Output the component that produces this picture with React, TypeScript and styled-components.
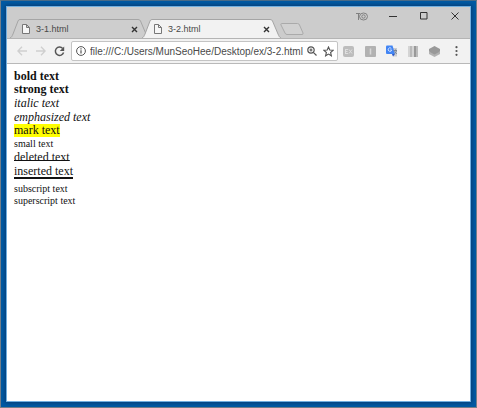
import React from "react";
import styled, { createGlobalStyle, css } from "styled-components";

const GlobalStyle = createGlobalStyle`
  *, *::before, *::after { box-sizing: border-box; }
  body { margin: 0; }
  button, input { font: inherit; color: inherit; border: 0; padding: 0; margin: 0; background: none; }
  svg { display: block; flex: none; }
`;

const Desktop = styled.div`
  min-height: 100vh;
  display: flex;
  padding: 5px;
  background: #005aa4;
  border: 1px solid #75808a;
  border-top-color: #496c88;
  font-family: "Liberation Sans", Arial, sans-serif;
`;

const BrowserWindow = styled.main`
  flex: 1;
  min-width: 0;
  display: flex;
  flex-direction: column;
  background: #fff;
  outline: 1px solid #70afe0;
  outline-offset: -1px;
  box-shadow: 0 0 4px 1px #083c72;
  padding: 1px;
`;

const TitleBar = styled.header`
  display: flex;
  align-items: flex-end;
  height: 31px;
  padding-left: 3px;
  background: #cccccc;
`;

const TabShape = styled.div<{ $active?: boolean }>`
  position: relative;
  z-index: ${(p) => (p.$active ? 1 : 0)};
  display: flex;
  flex: 0 1 139px;
  min-width: 0;
  height: 19px;
  & + & { margin-left: -7px; }
  color: ${(p) => (p.$active ? "#f2f2f2" : "#cecece")};
`;

const TabBody = styled.div`
  flex: 1;
  min-width: 0;
  display: flex;
  align-items: center;
  justify-content: space-between;
  border-top: 1px solid #a5a5a5;
  background: currentColor;
`;

const TabTitle = styled.button`
  display: flex;
  align-items: center;
  gap: 6px;
  padding-left: 2px;
  height: 18px;
  font-size: 9px;
  line-height: 12px;
  color: #484848;
`;

const CloseTab = styled.button`
  color: #333;
`;

const NewTab = styled.button`
  margin: 0 0 3px -1px;
`;

const WindowButtons = styled.div`
  display: flex;
  align-self: flex-start;
  align-items: center;
  margin-left: auto;
  height: 18px;
`;

const WindowButton = styled.button`
  display: grid;
  place-items: center;
  width: 31px;
  height: 16px;
  color: #333;
`;

const Toolbar = styled.nav`
  display: flex;
  align-items: center;
  height: 26px;
  padding: 0 7px 0 5px;
  background: #f2f2f2;
  border-top: 1px solid #b4b4b4;
  border-bottom: 1px solid #b9b9b9;
`;

const IconButton = styled.button<{ $muted?: boolean }>`
  display: grid;
  place-items: center;
  flex: none;
  width: 19px;
  height: 18px;
  color: ${(p) => (p.$muted ? "#cfcfcf" : "#555")};
`;

const AddressBar = styled.div`
  flex: 1;
  min-width: 0;
  display: flex;
  align-items: center;
  height: 20px;
  margin-left: 2px;
  padding-left: 4px;
  background: #fff;
  border: 1px solid #c4c4c4;
  border-radius: 2px;
  color: #555;

  ${IconButton} { width: 17px; }
`;

const AddressInput = styled.input`
  flex: 1;
  min-width: 0;
  margin-left: 4px;
  height: 16px;
  font-size: 10px;
  color: #4a4a4a;
  outline: 0;
`;

const Extensions = styled.div`
  display: flex;
  align-items: center;
  justify-content: space-between;
  flex: none;
  width: 121px;
  margin-left: 4px;
`;

const ExtensionButton = styled.button`
  display: grid;
  place-items: center;
  width: 13px;
  height: 18px;
`;

const Page = styled.article`
  flex: 1;
  padding: 5px 7px;
  background: #fff;
  color: #111;
  font-family: "Liberation Serif", "Times New Roman", serif;
  font-size: 12px;
`;

const Line = styled.div<{ $height: number; $gap?: boolean }>`
  height: ${(p) => p.$height}px;
  line-height: ${(p) => p.$height}px;
  ${(p) => p.$gap && css`margin-top: 5px;`}

  small, sub, sup { font-size: 10px; line-height: inherit; vertical-align: top; }
  mark { display: inline-block; background: #ff0; color: #111; }
  del { text-decoration: underline 1px; text-underline-offset: -1px; text-decoration-skip-ink: none; }
  ins { text-decoration: underline 2px; text-underline-offset: 2px; }
`;

const FileIcon = () => (
  <svg width="8" height="10" viewBox="0 0 8 10" fill="none" stroke="#777">
    <path d="M.5.5h4l3 3v6h-7zM4.5.5v3h3" fill="#f6f6f6" />
  </svg>
);

function BrowserTab({ title, active }: { title: string; active?: boolean }) {
  return (
    <TabShape $active={active}>
      <svg width="10" height="19" viewBox="0 0 10 19">
        <path d="M0 19C2 18 2 17 3 15L8 2Q8.500 .5 10 .5V19Z" fill="currentColor" />
        <path d="M0 19C2 18 2 17 3 15L8 2Q8.500 .5 10 .5" fill="none" stroke="#a5a5a5" />
      </svg>
      <TabBody>
        <TabTitle role="tab" aria-selected={!!active}>
          <FileIcon />
          {title}
        </TabTitle>
        <CloseTab aria-label={`Close ${title}`}>
          <svg width="7" height="7" viewBox="0 0 7 7" stroke="currentColor" strokeWidth="1.400">
            <path d="M1 1l5 5M6 1L1 6" />
          </svg>
        </CloseTab>
      </TabBody>
      <svg width="11" height="19" viewBox="0 0 11 19">
        <path d="M0 .5Q2 .5 2.500 2L8 15C9 17 9 18 11 19H0Z" fill="currentColor" />
        <path d="M0 .5Q2 .5 2.500 2L8 15C9 17 9 18 11 19" fill="none" stroke="#a5a5a5" />
      </svg>
    </TabShape>
  );
}

export default function App() {
  return (
    <>
      <GlobalStyle />
      <Desktop>
        <BrowserWindow>
          <TitleBar>
            <BrowserTab title="3-1.html" />
            <BrowserTab title="3-2.html" active />
            <NewTab aria-label="New tab">
              <svg width="24" height="12" viewBox="0 0 24 12">
                <path d="M1.500.5H17.500Q19 .5 19.500 2L23 10Q23.500 11.500 22 11.500H7Q5.500 11.500 5 10L1 2Q.5.5 1.500.5Z" fill="#d1d1d1" stroke="#aaa" />
              </svg>
            </NewTab>
            <WindowButtons>
              <WindowButton aria-label="Profile">
                <svg width="12" height="9" viewBox="0 0 12 9" fill="none" stroke="#808080">
                  <path d="M0 1.500h4M2.500 1.500v6.500" />
                  <ellipse cx="7.500" cy="4.500" rx="4" ry="3.500" />
                  <circle cx="7.500" cy="4.500" r="1.700" />
                </svg>
              </WindowButton>
              <WindowButton aria-label="Minimize">
                <svg width="8" height="8" viewBox="0 0 8 8" stroke="currentColor"><path d="M0 4.500h8" /></svg>
              </WindowButton>
              <WindowButton aria-label="Maximize">
                <svg width="8" height="8" viewBox="0 0 8 8" stroke="currentColor"><path d="M.5.5h6.500v6.500H.5z" fill="none" /></svg>
              </WindowButton>
              <WindowButton aria-label="Close">
                <svg width="8" height="8" viewBox="0 0 8 8" stroke="currentColor"><path d="M.5.5l7 7M7.500.5l-7 7" /></svg>
              </WindowButton>
            </WindowButtons>
          </TitleBar>
          <Toolbar>
            <IconButton aria-label="Back" $muted>
              <svg width="10" height="10" viewBox="0 0 10 10" fill="none" stroke="currentColor" strokeWidth="1.300"><path d="M10 5H1M5 .8L.9 5 5 9.200" /></svg>
            </IconButton>
            <IconButton aria-label="Forward" $muted>
              <svg width="10" height="10" viewBox="0 0 10 10" fill="none" stroke="currentColor" strokeWidth="1.300"><path d="M0 5h9M5 .8L9.100 5 5 9.200" /></svg>
            </IconButton>
            <IconButton aria-label="Reload">
              <svg width="11" height="11" viewBox="0 0 11 11" fill="none" stroke="currentColor" strokeWidth="1.500">
                <path d="M8.700 2.400A4.200 4.200 0 1 0 9.600 6.500" />
                <path d="M10.200.5v4.400H5.800z" fill="currentColor" stroke="none" />
              </svg>
            </IconButton>
            <AddressBar>
              <svg width="10" height="10" viewBox="0 0 10 10" fill="none" stroke="currentColor">
                <circle cx="5" cy="5" r="4.400" />
                <path d="M5 4.300v3.200M5 2.300v1.200" strokeWidth="1.200" />
              </svg>
              <AddressInput aria-label="Address" defaultValue="file:///C:/Users/MunSeoHee/Desktop/ex/3-2.html" />
              <IconButton aria-label="Zoom">
                <svg width="10" height="10" viewBox="0 0 10 10" fill="none" stroke="currentColor" strokeWidth="1.200">
                  <circle cx="4" cy="4" r="3.200" /><path d="M6.300 6.300l3.200 3.200M2.500 4h3M4 2.500v3" />
                </svg>
              </IconButton>
              <IconButton aria-label="Bookmark">
                <svg width="11" height="11" viewBox="0 0 11 11" fill="none" stroke="currentColor" strokeWidth="1.100">
                  <path d="M5.500 1l1.300 3 3.300.3-2.500 2.200.8 3.300-2.900-1.700-2.900 1.700.8-3.300L.9 4.300 4.200 4z" />
                </svg>
              </IconButton>
            </AddressBar>
            <Extensions>
              <ExtensionButton aria-label="Code extension">
                <svg width="11" height="11" viewBox="0 0 11 11">
                  <rect width="11" height="11" rx="2" fill="#bdbdbd" />
                  <path d="M2 3.500h3M2 5.500h2.500M2 7.500h3M2.500 3.500v4M6 3.500l3 4M9 3.500l-3 4" stroke="#dedede" />
                </svg>
              </ExtensionButton>
              <ExtensionButton aria-label="Text extension">
                <svg width="11" height="11" viewBox="0 0 11 11">
                  <rect width="11" height="11" rx="1" fill="#b2b2b2" /><path d="M5.500 2.500v6" stroke="#d8d8d8" strokeWidth="1.500" />
                </svg>
              </ExtensionButton>
              <ExtensionButton aria-label="Translate">
                <svg width="12" height="12" viewBox="0 0 12 12">
                  <path d="M5 3h6v8.500H7z" fill="#c9cbd0" />
                  <path d="M1 .5h5.500L9 9H1Q0 9 0 8V1.500Q0 .5 1 .5z" fill="#4285f4" />
                  <path d="M6 9h3l-2 2.500z" fill="#2a56c6" />
                  <path d="M5.300 3.400A1.800 1.800 0 1 0 5.700 5H4.200" fill="none" stroke="#cfe0ff" />
                  <path d="M7.500 5.500h3.500M9.500 4.500v1M10.500 5.500Q10 8 8.500 8.500M8.500 6.500l2.300 2.500" fill="none" stroke="#7b8796" />
                </svg>
              </ExtensionButton>
              <ExtensionButton aria-label="Color extension">
                <svg width="10" height="11" viewBox="0 0 10 11">
                  <path d="M0 0h2v11H0z" fill="#d4d4d4" /><path d="M2 0h2v11H2z" fill="#bababa" />
                  <path d="M4 0h2v11H4z" fill="#d4d4d4" /><path d="M6 0h2v11H6z" fill="#999" /><path d="M8 0h2v11H8z" fill="#bcbcbc" />
                </svg>
              </ExtensionButton>
              <ExtensionButton aria-label="Layers extension">
                <svg width="11" height="11" viewBox="0 0 11 11">
                  <path d="M5.500 3.500L11 6v2L5.500 11 0 8V6z" fill="#b2b2b2" /><path d="M5.500 0L11 3v2.500l-5.500 3-5.500-3V3z" fill="#999" />
                </svg>
              </ExtensionButton>
              <ExtensionButton aria-label="Menu">
                <svg width="3" height="10" viewBox="0 0 3 10" fill="#555">
                  <circle cx="1.500" cy="1.200" r="1.100" /><circle cx="1.500" cy="5" r="1.100" /><circle cx="1.500" cy="8.800" r="1.100" />
                </svg>
              </ExtensionButton>
            </Extensions>
          </Toolbar>
          <Page>
            <Line $height={14}><b>bold text</b></Line>
            <Line $height={13}><strong>strong text</strong></Line>
            <Line $height={14}><i>italic text</i></Line>
            <Line $height={14}><em>emphasized text</em></Line>
            <Line $height={13}><mark>mark text</mark></Line>
            <Line $height={14}><small>small text</small></Line>
            <Line $height={13}><del>deleted text</del></Line>
            <Line $height={14}><ins>inserted text</ins></Line>
            <Line $height={12} $gap><sub>subscript text</sub></Line>
            <Line $height={11}><sup>superscript text</sup></Line>
          </Page>
        </BrowserWindow>
      </Desktop>
    </>
  );
}
